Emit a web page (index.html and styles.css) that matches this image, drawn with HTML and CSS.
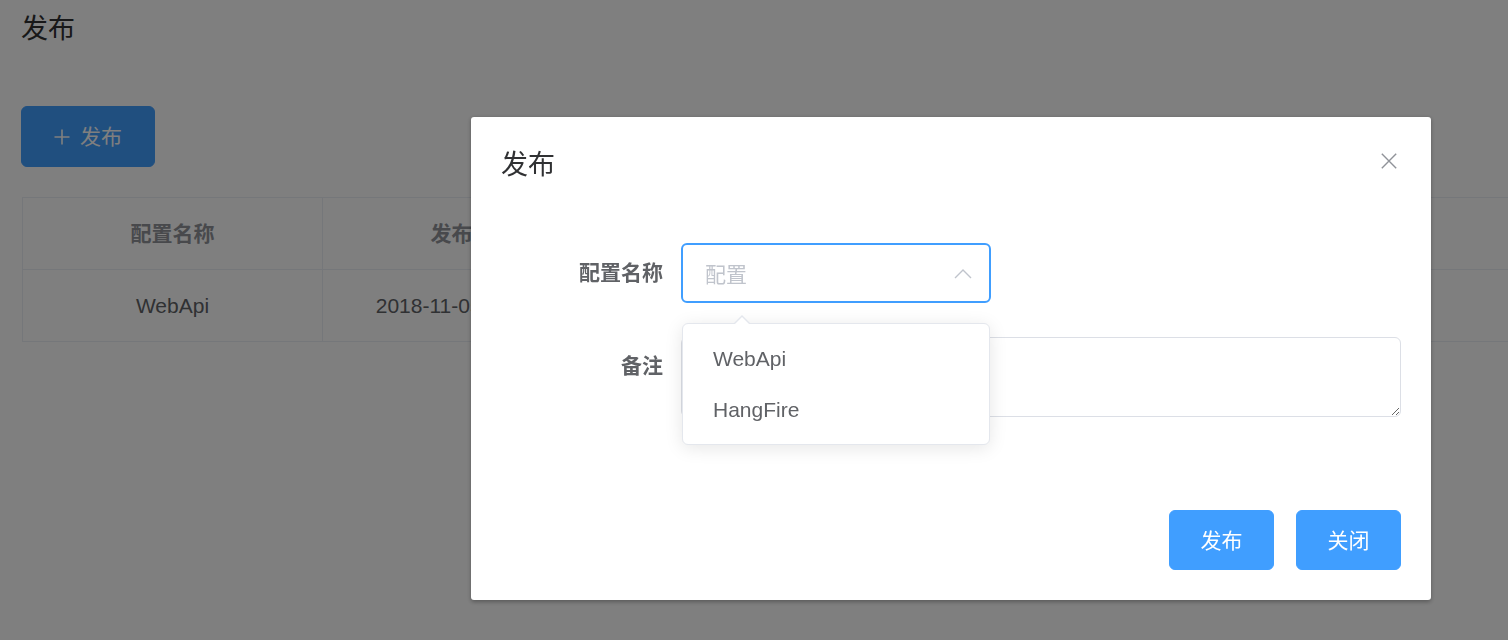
FILE: index.html
```html
<!DOCTYPE html>
<html lang="zh-CN">
<head>
<meta charset="utf-8">
<title>发布</title>
<link rel="stylesheet" href="styles.css">
</head>
<body>
<div class="page">
  <h2 class="page-title">发布</h2>
  <div class="toolbar">
    <button class="btn btn-primary btn-add">
      <svg class="icon-plus" viewBox="0 0 16 16" width="16" height="16"><path d="M8 0.5V15.5M0.5 8H15.5" stroke="currentColor" stroke-width="1.6" fill="none"/></svg>
      <span>发布</span>
    </button>
  </div>
  <div class="table-wrap">
    <table class="grid">
      <thead>
        <tr><th>配置名称</th><th>发布时间</th><th>发布人</th><th>备注</th><th>操作</th></tr>
      </thead>
      <tbody>
        <tr><td>WebApi</td><td>2018-11-05 10:20:36</td><td>admin</td><td>初始发布</td><td>查看</td></tr>
      </tbody>
    </table>
  </div>
</div>

<div class="mask"></div>

<div class="dialog">
  <div class="dialog-header">
    <span class="dialog-title">发布</span>
    <button class="dialog-close" aria-label="关闭">
      <svg viewBox="0 0 16 16" width="16" height="16"><path d="M0.8 0.8L15.2 15.2M15.2 0.8L0.8 15.2" stroke="currentColor" stroke-width="1.4" fill="none"/></svg>
    </button>
  </div>
  <div class="dialog-body">
    <form class="form">
      <div class="form-item">
        <label class="form-label">配置名称</label>
        <div class="form-content">
          <div class="select">
            <div class="select-input">
              <span class="placeholder">配置</span>
              <svg class="select-arrow" viewBox="0 0 18 10" width="18" height="10"><path d="M1 9L9 1L17 9" stroke="currentColor" stroke-width="1.4" fill="none"/></svg>
            </div>
            <div class="dropdown">
              <span class="dropdown-arrow"></span>
              <ul class="dropdown-list">
                <li class="dropdown-item">WebApi</li>
                <li class="dropdown-item">HangFire</li>
              </ul>
            </div>
          </div>
        </div>
      </div>
      <div class="form-item">
        <label class="form-label">备注</label>
        <div class="form-content">
          <textarea class="textarea" rows="2"></textarea>
        </div>
      </div>
    </form>
  </div>
  <div class="dialog-footer">
    <button class="btn btn-primary">发布</button>
    <button class="btn btn-primary">关闭</button>
  </div>
</div>
</body>
</html>
```

FILE: styles.css
```css
* { box-sizing: border-box; }

html, body {
  margin: 0;
  padding: 0;
  width: 1508px;
  height: 640px;
  overflow: hidden;
  background: #ffffff;
  font-family: "Liberation Sans", "Noto Sans CJK SC", Arial, sans-serif;
  font-size: 21px;
  color: #606266;
}

.page {
  padding: 0 0 0 21px;
}

.page-title {
  margin: 11px 0 0 0;
  font-size: 27px;
  line-height: 36px;
  font-weight: 400;
  color: #303133;
}

.toolbar {
  margin-top: 59px;
  display: flex;
}

.btn {
  font-family: inherit;
  font-size: 21px;
  line-height: 21px;
  height: 60px;
  padding: 18px 30px;
  border-radius: 6px;
  border: 1.5px solid #409eff;
  background: #409eff;
  color: #ffffff;
  display: inline-flex;
  align-items: center;
  justify-content: center;
  cursor: pointer;
}

.btn-add {
  height: 61px;
  width: 134px;
  padding: 0;
  gap: 10px;
}

.icon-plus {
  display: block;
}

.table-wrap {
  margin-top: 30px;
  margin-left: 1px;
  overflow: hidden;
}

.grid {
  border-collapse: collapse;
  table-layout: fixed;
  width: 1500px;
  border: 1.5px solid #ebeef5;
}

.grid th, .grid td {
  width: 300px;
  border: 1.5px solid #ebeef5;
  text-align: center;
  padding: 18px 0;
  line-height: 35px;
  white-space: nowrap;
  overflow: hidden;
}

.grid th {
  color: #909399;
  font-weight: 700;
}

.grid td {
  color: #606266;
}

.mask {
  position: fixed;
  inset: 0;
  background: rgba(0, 0, 0, 0.5);
}

.dialog {
  position: fixed;
  top: 117px;
  left: 471px;
  width: 960px;
  background: #ffffff;
  border-radius: 3px;
  box-shadow: 0 1.5px 4.5px rgba(0, 0, 0, 0.3);
}

.dialog-header {
  padding: 30px 30px 15px;
  display: flex;
  align-items: center;
  justify-content: space-between;
}

.dialog-title {
  font-size: 27px;
  line-height: 36px;
  color: #303133;
}

.dialog-close {
  border: 0;
  background: none;
  padding: 0;
  margin-right: 4px;
  margin-top: -8px;
  color: #909399;
  display: flex;
}

.dialog-body {
  padding: 45px 30px 45px;
}

.form-item {
  display: flex;
  margin-bottom: 33px;
}

.form-label {
  width: 180px;
  flex: none;
  text-align: right;
  padding-right: 18px;
  line-height: 60px;
  font-weight: 700;
  color: #606266;
}

.form-content {
  flex: 1;
}

.select {
  position: relative;
  width: 310px;
}

.select-input {
  height: 60px;
  border: 2px solid #409eff;
  border-radius: 6px;
  display: flex;
  align-items: center;
  justify-content: space-between;
  padding: 0 17px 0 22px;
}

.placeholder {
  color: #c0c4cc;
}

.select-arrow {
  color: #c0c4cc;
  display: block;
  margin-top: 2px;
}

.dropdown {
  position: absolute;
  top: 80px;
  left: 1px;
  width: 308px;
  background: #ffffff;
  border: 1.5px solid #e4e7ed;
  border-radius: 6px;
  box-shadow: 0 3px 18px 0 rgba(0, 0, 0, 0.1);
  z-index: 5;
}

.dropdown-arrow {
  position: absolute;
  top: -9px;
  left: 50px;
  width: 0;
  height: 0;
  border-left: 9px solid transparent;
  border-right: 9px solid transparent;
  border-bottom: 9px solid #e4e7ed;
}

.dropdown-arrow::after {
  content: "";
  position: absolute;
  top: 1.5px;
  left: -8px;
  border-left: 8px solid transparent;
  border-right: 8px solid transparent;
  border-bottom: 8px solid #ffffff;
}

.dropdown-list {
  list-style: none;
  margin: 0;
  padding: 9px 0;
}

.dropdown-item {
  height: 51px;
  line-height: 51px;
  padding: 0 30px;
  color: #606266;
}

.textarea {
  display: block;
  width: 100%;
  height: 80px;
  margin-top: 1px;
  padding: 7.5px 22px;
  border: 1.5px solid #dcdfe6;
  border-radius: 6px;
  font-family: inherit;
  font-size: 21px;
  line-height: 1.5;
  color: #606266;
  resize: vertical;
  outline: none;
}

.dialog-footer {
  padding: 15px 30px 30px;
  display: flex;
  justify-content: flex-end;
  gap: 22px;
}

.dialog-footer .btn {
  width: 105px;
  padding: 0;
}
```
